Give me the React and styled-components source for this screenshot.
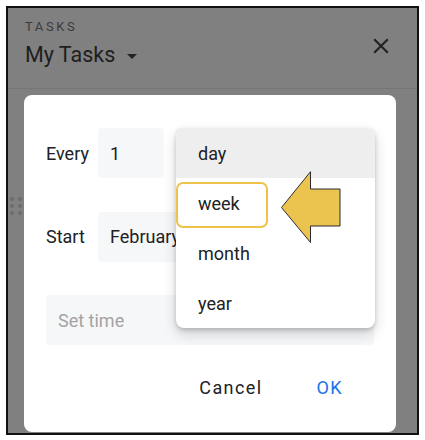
import React from 'react';
import styled, { createGlobalStyle } from 'styled-components';

const GlobalStyle = createGlobalStyle`
  html, body {
    margin: 0;
    padding: 0;
    background: #ffffff;
    font-family: Roboto, "Liberation Sans", Arial, sans-serif;
  }
`;

const Frame = styled.div`
  position: relative;
  box-sizing: border-box;
  margin: 6px;
  width: 413px;
  height: 429px;
  border: 2px solid #111;
  background: #808080;
  overflow: hidden;
  display: flex;
  flex-direction: column;
`;

const Header = styled.div`
  height: 80px;
  box-sizing: border-box;
  padding: 12px 23px 0 17px;
  display: flex;
  justify-content: space-between;
  align-items: flex-start;
`;

const TitleBlock = styled.div`
  display: flex;
  flex-direction: column;
  gap: 8px;
`;

const Eyebrow = styled.div`
  font-size: 13px;
  line-height: 14px;
  font-weight: 400;
  letter-spacing: 2.6px;
  color: #3c3c3c;
`;

const ListName = styled.div`
  display: flex;
  align-items: center;
  font-size: 21.5px;
  line-height: 26px;
  color: #1e1e1e;
`;

const Caret = styled.span`
  margin: 3px 0 0 12px;
  width: 0;
  height: 0;
  border-left: 5.5px solid transparent;
  border-right: 5.5px solid transparent;
  border-top: 5px solid #222;
`;

const CloseButton = styled.svg`
  margin-top: 13px;
  width: 26px;
  height: 26px;
  fill: #222;
`;

const Divider = styled.div`
  height: 1px;
  background: rgba(0, 0, 0, 0.08);
`;

const DragHandle = styled.div`
  position: absolute;
  left: 2px;
  top: 189px;
  display: grid;
  grid-template-columns: 4px 4px;
  grid-template-rows: repeat(3, 4px);
  column-gap: 4px;
  row-gap: 3px;
  span {
    border-radius: 50%;
    background: #6c6c6c;
  }
`;

const Dialog = styled.div`
  margin: 6px 21px 0 16px;
  height: 337px;
  box-sizing: border-box;
  padding: 33px 22px 0 22px;
  background: #fff;
  border-radius: 8px;
  display: flex;
  flex-direction: column;
`;

const Form = styled.div`
  display: grid;
  grid-template-columns: 52px 66px 1fr;
  grid-auto-rows: 50px;
  row-gap: 33.5px;
`;

const Label = styled.div`
  display: flex;
  align-items: center;
  font-size: 18px;
  color: #202124;
`;

const Field = styled.div`
  grid-column: ${(p) => p.span || 'auto'};
  display: flex;
  align-items: center;
  padding-left: 12px;
  background: #f6f7f8;
  border-radius: 4px;
  font-size: 18px;
  color: ${(p) => (p.placeholder ? '#a3a3a3' : '#202124')};
  white-space: nowrap;
  overflow: hidden;
`;

const SelectWrap = styled.div`
  position: relative;
  margin-left: 12px;
  background: #f6f7f8;
  border-radius: 4px;
`;

const Menu = styled.div`
  position: absolute;
  z-index: 2;
  top: 0;
  left: 0;
  right: -1px;
  background: #fff;
  border-radius: 8px;
  box-shadow: 0 2px 4px rgba(0, 0, 0, 0.18), 0 6px 14px rgba(0, 0, 0, 0.16);
`;

const MenuItem = styled.div`
  height: 50px;
  display: flex;
  align-items: center;
  padding-left: 22px;
  font-size: 18px;
  color: #202124;
  background: ${(p) => (p.active ? '#eeeeee' : 'transparent')};
  border-radius: ${(p) => (p.first ? '8px 8px 0 0' : '0')};
`;

const Highlight = styled.div`
  position: absolute;
  left: 0;
  top: 54px;
  width: 92px;
  height: 46px;
  box-sizing: border-box;
  border: 2px solid #efc24a;
  border-radius: 7px;
`;

const Arrow = styled.svg`
  position: absolute;
  left: 105px;
  top: 43px;
  width: 60px;
  height: 72px;
  overflow: visible;
`;

const Actions = styled.div`
  margin-top: 24px;
  padding-right: 23px;
  display: flex;
  justify-content: flex-end;
  gap: 38px;
`;

const TextButton = styled.button`
  height: 36px;
  padding: 0 8px;
  border: none;
  background: none;
  font-family: inherit;
  font-size: 18px;
  font-weight: 400;
  letter-spacing: 1.4px;
  color: ${(p) => (p.primary ? '#1a73e8' : '#202124')};
`;

const units = ['day', 'week', 'month', 'year'];

export default function App() {
  return (
    <>
      <GlobalStyle />
      <Frame>
        <Header>
          <TitleBlock>
            <Eyebrow>TASKS</Eyebrow>
            <ListName>
              My Tasks
              <Caret />
            </ListName>
          </TitleBlock>
          <CloseButton viewBox="0 0 24 24">
            <path d="M19 6.41L17.59 5 12 10.59 6.41 5 5 6.41 10.59 12 5 17.59 6.41 19 12 13.41 17.59 19 19 17.59 13.41 12z" />
          </CloseButton>
        </Header>
        <Divider />
        <DragHandle>
          {[0, 1, 2, 3, 4, 5].map((i) => (
            <span key={i} />
          ))}
        </DragHandle>
        <Dialog>
          <Form>
            <Label>Every</Label>
            <Field>1</Field>
            <SelectWrap>
              <Menu>
                {units.map((u, i) => (
                  <MenuItem key={u} active={i === 0} first={i === 0}>
                    {u}
                  </MenuItem>
                ))}
                <Highlight />
                <Arrow viewBox="0 0 60 72">
                  <polygon
                    points="0.5,36.5 29.5,0.7 29.5,18 59,18 59,55 29.5,55 29.5,71.5"
                    fill="#ebc34f"
                    stroke="#2b2b33"
                    strokeWidth="1"
                  />
                </Arrow>
              </Menu>
            </SelectWrap>
            <Label>Start</Label>
            <Field span="2 / 4">February 1, 2021</Field>
            <Field span="1 / 4" placeholder>
              Set time
            </Field>
          </Form>
          <Actions>
            <TextButton>Cancel</TextButton>
            <TextButton primary>OK</TextButton>
          </Actions>
        </Dialog>
      </Frame>
    </>
  );
}
